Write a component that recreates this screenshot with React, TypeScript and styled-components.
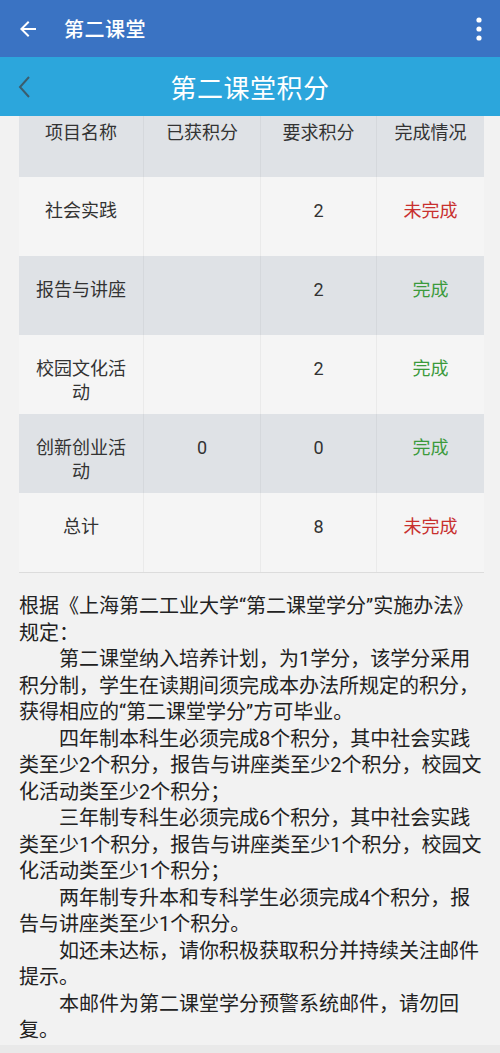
import React, {FC} from "react";
import styled, {createGlobalStyle} from "styled-components";

const GlobalStyle = createGlobalStyle`
  html, body {
    margin: 0;
    padding: 0;
    background: #f2f2f2;
  }
  body {
    font-family: Roboto, "Noto Sans CJK SC", sans-serif;
    color: #333;
  }
`;

const Page = styled.div`
  width: 500px;
  min-height: 1053px;
  background: #f2f2f2;
  display: flex;
  flex-direction: column;
`;

const AppBar = styled.div`
  height: 57px;
  background: #3a73c3;
  display: flex;
  align-items: center;
  padding: 0 16px;
  box-sizing: border-box;
  color: #fff;
`;
const AppTitle = styled.div`
  font-size: 20px;
  font-weight: 500;
  margin-left: 24px;
  flex: 1;
  letter-spacing: 0.5px;
`;
const IconBox = styled.div`
  display: flex;
  align-items: center;
`;

const SubBar = styled.div`
  height: 59px;
  background: #2ca6dc;
  display: grid;
  grid-template-columns: 60px 1fr 60px;
  align-items: center;
`;
const SubTitle = styled.div`
  text-align: center;
  font-size: 26px;
  color: #fff;
  letter-spacing: 0.5px;
`;
const BackChevron = styled.div`
  padding-left: 18px;
  display: flex;
  align-items: center;
`;

const Table = styled.div`
  margin: 0 16px 0 19px;
  border-bottom: 1px solid #dcdcdc;
`;
const Row = styled.div<{ $shade?: boolean; $header?: boolean }>`
  display: grid;
  grid-template-columns: 124px 117px 116px 108px;
  height: ${(p) => (p.$header ? "61px" : "79px")};
  background: ${(p) => (p.$shade ? "#dfe2e6" : "#f5f5f5")};
  ${(p) => (p.$shade ? "box-shadow: 0 1px 0 #d9dbde;" : "")}
`;
const Cell = styled.div<{ $header?: boolean; $status?: "ok" | "no" }>`
  padding: ${(p) => (p.$header ? "5px 6px 0" : "22px 10px 0")};
  font-size: 18px;
  line-height: 24px;
  text-align: center;
  border-left: 1px solid rgba(0, 0, 0, 0.045);
  color: ${(p) => (p.$status === "ok" ? "#3c9a3c" : p.$status === "no" ? "#c8302e" : "#333")};
  &:first-child {
    border-left: none;
  }
`;

const Notice = styled.div`
  width: 466px;
  margin: 20px 0 0 19px;
  font-size: 20px;
  line-height: 26.5px;
  color: #222;
`;
const Para = styled.p<{ $indent?: boolean }>`
  margin: 0;
  text-indent: ${(p) => (p.$indent ? "2em" : "0")};
`;

const Footer = styled.div`
  margin-top: auto;
  height: 8px;
  background: #e9e9e9;
`;

type Item = { name: string; got: string; need: string; done: boolean };

const items: Item[] = [
    {name: "社会实践", got: "", need: "2", done: false},
    {name: "报告与讲座", got: "", need: "2", done: true},
    {name: "校园文化活动", got: "", need: "2", done: true},
    {name: "创新创业活动", got: "0", need: "0", done: true},
    {name: "总计", got: "", need: "8", done: false},
];

const ArrowBack: FC = () => (
    <svg width="24" height="24" viewBox="0 0 24 24" fill="#fff">
        <path d="M20 11H7.83l5.59-5.59L12 4l-8 8 8 8 1.41-1.41L7.83 13H20v-2z"/>
    </svg>
);

const MoreDots: FC = () => (
    <svg width="10" height="26" viewBox="0 0 10 26" fill="#fff">
        <circle cx="5" cy="4" r="2.6"/>
        <circle cx="5" cy="13" r="2.6"/>
        <circle cx="5" cy="22" r="2.6"/>
    </svg>
);

const Chevron: FC = () => (
    <svg width="14" height="24" viewBox="0 0 14 24">
        <polyline points="11,2 2,12 11,22" fill="none" stroke="#3b5d6e" strokeWidth="2"/>
    </svg>
);

const App: FC = () => {
    return (
        <Page>
            <GlobalStyle/>
            <AppBar>
                <IconBox><ArrowBack/></IconBox>
                <AppTitle>第二课堂</AppTitle>
                <IconBox><MoreDots/></IconBox>
            </AppBar>
            <SubBar>
                <BackChevron><Chevron/></BackChevron>
                <SubTitle>第二课堂积分</SubTitle>
                <div/>
            </SubBar>
            <Table>
                <Row $header $shade>
                    <Cell $header>项目名称</Cell>
                    <Cell $header>已获积分</Cell>
                    <Cell $header>要求积分</Cell>
                    <Cell $header>完成情况</Cell>
                </Row>
                {items.map((it, i) => (
                    <Row key={it.name} $shade={i % 2 === 1}>
                        <Cell>{it.name}</Cell>
                        <Cell>{it.got}</Cell>
                        <Cell>{it.need}</Cell>
                        <Cell $status={it.done ? "ok" : "no"}>{it.done ? "完成" : "未完成"}</Cell>
                    </Row>
                ))}
            </Table>
            <Notice>
                <Para>根据《上海第二工业大学“第二课堂学分”实施办法》规定：</Para>
                <Para $indent>第二课堂纳入培养计划，为1学分，该学分采用积分制，学生在读期间须完成本办法所规定的积分，获得相应的“第二课堂学分”方可毕业。</Para>
                <Para $indent>四年制本科生必须完成8个积分，其中社会实践类至少2个积分，报告与讲座类至少2个积分，校园文化活动类至少2个积分；</Para>
                <Para $indent>三年制专科生必须完成6个积分，其中社会实践类至少1个积分，报告与讲座类至少1个积分，校园文化活动类至少1个积分；</Para>
                <Para $indent>两年制专升本和专科学生必须完成4个积分，报告与讲座类至少1个积分。</Para>
                <Para $indent>如还未达标，请你积极获取积分并持续关注邮件提示。</Para>
                <Para $indent>本邮件为第二课堂学分预警系统邮件，请勿回复。</Para>
            </Notice>
            <Footer/>
        </Page>
    );
};

export default App;
